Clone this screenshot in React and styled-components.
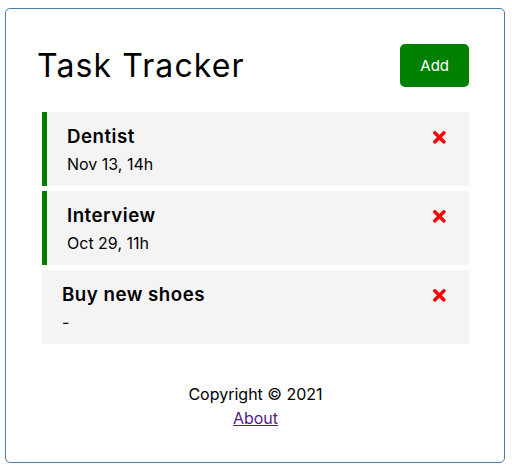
import styled, { createGlobalStyle } from 'styled-components';
import { FaTimes } from 'react-icons/fa';

const tasks = [
  { id: 1, text: 'Dentist', day: 'Nov 13, 14h', reminder: true },
  { id: 2, text: 'Interview', day: 'Oct 29, 11h', reminder: true },
  { id: 3, text: 'Buy new shoes', day: '-', reminder: false },
];

const GlobalStyle = createGlobalStyle`
  * {
    box-sizing: border-box;
    margin: 0;
    padding: 0;
  }

  body {
    font-family: Inter, 'Noto Sans', sans-serif;
    background: #fff;
    color: #000;
  }
`;

const Container = styled.div`
  width: 500px;
  margin: 8px 0 0 5px;
  min-height: 300px;
  border: 1px solid #4b7aa3;
  border-radius: 5px;
  padding: 30px 30px 32px 31px;
  overflow: auto;
`;

const Header = styled.header`
  display: flex;
  justify-content: space-between;
  align-items: center;
  margin-bottom: 20px;

  h1 {
    font-size: 32px;
    font-weight: 400;
    letter-spacing: 1.1px;
  }
`;

const Button = styled.button`
  display: inline-block;
  background: ${({ color }) => color};
  color: #fff;
  border: none;
  padding: 10px 20px;
  margin: 5px;
  border-radius: 5px;
  font-family: inherit;
  font-size: 15px;
  line-height: 23px;
  cursor: pointer;
`;

const Task = styled.div`
  background: #f4f4f4;
  margin: 5px;
  padding: 10px 20px;
  border-left: ${({ $reminder }) => ($reminder ? '5px solid green' : 'none')};
  cursor: pointer;

  h3 {
    display: flex;
    align-items: center;
    justify-content: space-between;
    font-size: 18.7px;
    font-weight: 600;
    line-height: 30px;
    letter-spacing: 0.5px;
  }

  p {
    font-size: 16px;
    line-height: 24px;
  }
`;

const Footer = styled.footer`
  margin-top: 38px;
  text-align: center;
  font-size: 16px;
  line-height: 24px;

  a {
    color: #551a8b;
  }
`;

export default function App() {
  return (
    <>
      <GlobalStyle />
      <Container>
        <Header>
          <h1>Task Tracker</h1>
          <Button color="green">Add</Button>
        </Header>
        {tasks.map((task) => (
          <Task key={task.id} $reminder={task.reminder}>
            <h3>
              {task.text} <FaTimes style={{ color: 'red', cursor: 'pointer' }} />
            </h3>
            <p>{task.day}</p>
          </Task>
        ))}
        <Footer>
          <p>Copyright &copy; 2021</p>
          <a href="#about">About</a>
        </Footer>
      </Container>
    </>
  );
}
